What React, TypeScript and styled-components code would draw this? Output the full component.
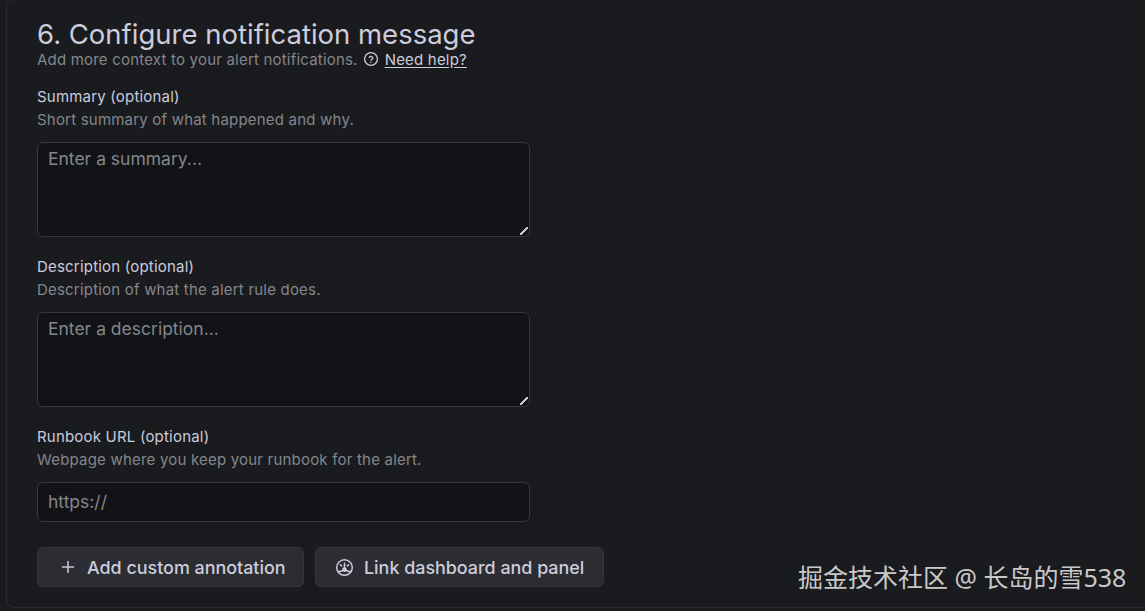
import React from "react";
import styled, { createGlobalStyle } from "styled-components";

const Global = createGlobalStyle`
  html, body { margin: 0; padding: 0; background: #1a1b1f; height: 611px; overflow: hidden; }
  #root { height: 611px; }
  * { box-sizing: border-box; }
`;

const Page = styled.div`
  position: relative;
  width: 1145px;
  height: 611px;
  padding: 0 0 3px 6px;
  overflow: hidden;
  font-family: Inter, "Noto Sans", sans-serif;
  background: #1a1b1f;
`;

const Panel = styled.section`
  height: 609px;
  margin-top: -1px;
  margin-right: -10px;
  padding: 17px 0 0 30px;
  border: 1px solid #2a2c31;
  border-radius: 8px;
  background: #1a1b1f;
`;

const Title = styled.h2`
  margin: 0;
  font-size: 27.5px;
  line-height: 34px;
  font-weight: 400;
  color: #ccccdc;
`;

const Subtitle = styled.div`
  display: flex;
  align-items: center;
  height: 18px;
  margin-top: -1px;
  font-size: 15px;
  color: #84868b;
  letter-spacing: 0.2px;
`;

const HelpLink = styled.a`
  display: inline-flex;
  align-items: center;
  gap: 6px;
  margin-left: 5px;
  color: #ccccdc;
  span { text-decoration: underline; text-underline-offset: 2px; }
  svg { display: block; }
`;

const Field = styled.div<{ $top: number }>`
  margin-top: ${(p) => p.$top}px;
  width: 493px;
`;

const Label = styled.label`
  display: block;
  height: 18px;
  line-height: 18px;
  font-size: 15px;
  font-weight: 400;
  letter-spacing: 0.2px;
  color: #ccccdc;
`;

const Hint = styled.div`
  margin-top: 5px;
  height: 18px;
  line-height: 18px;
  font-size: 15px;
  color: #84868b;
  letter-spacing: 0.2px;
`;

const inputBase = `
  display: block;
  width: 493px;
  margin-top: 13px;
  border: 1px solid #36383d;
  border-radius: 6px;
  background: #121317;
  color: #ccccdc;
  font-family: Inter, "Noto Sans", sans-serif;
  font-size: 17.5px;
  padding: 5px 10px;
  outline: none;
  &::placeholder { color: #84868b; opacity: 1; }
`;

const TextArea = styled.textarea`
  ${inputBase}
  height: 95px;
  line-height: 22px;
  resize: both;
  &::-webkit-resizer {
    background: linear-gradient(135deg, transparent 38%, #c8c8c8 38%, #c8c8c8 62%, transparent 62%) no-repeat right 1px bottom 1px / 8px 8px;
  }
`;

const TextInput = styled.input`
  ${inputBase}
  margin-top: 13px;
  height: 40px;
  padding-bottom: 7px;
`;

const Actions = styled.div`
  display: flex;
  gap: 11px;
  margin-top: 25px;
`;

const Button = styled.button<{ $w: number; $pad: number; $gap: number }>`
  display: flex;
  align-items: center;
  gap: ${(p) => p.$gap}px;
  width: ${(p) => p.$w}px;
  height: 40px;
  padding: 0 0 0 ${(p) => p.$pad}px;
  border: 1px solid #33353a;
  border-radius: 6px;
  background: #2b2d32;
  color: #ccccdc;
  font-family: Inter, "Noto Sans", sans-serif;
  font-size: 17.9px;
  font-weight: 500;
  white-space: nowrap;
  svg { flex: none; display: block; }
`;

const Watermark = styled.div`
  position: absolute;
  left: 798px;
  top: 560px;
  font-family: "Noto Sans", "Noto Sans CJK SC", sans-serif;
  font-size: 25px;
  line-height: 34px;
  color: #c9c9c9;
  white-space: nowrap;
`;

export default function App() {
  return (
    <Page>
      <Global />
      <Panel>
        <Title>6. Configure notification message</Title>
        <Subtitle>
          Add more context to your alert notifications.
          <HelpLink>
            <svg width="16" height="16" viewBox="0 0 16 16" fill="none" stroke="#ccccdc" strokeWidth="1.3" strokeLinecap="round">
              <circle cx="8" cy="8" r="6.4" />
              <path d="M6.2 6.4a1.9 1.9 0 0 1 3.6.5c0 1.2-1.8 1.5-1.8 2.3" />
              <path d="M8 11.2v.1" />
            </svg>
            <span>Need help?</span>
          </HelpLink>
        </Subtitle>
        <Field $top={20}>
          <Label>Summary (optional)</Label>
          <Hint>Short summary of what happened and why.</Hint>
          <TextArea placeholder="Enter a summary..." />
        </Field>
        <Field $top={21}>
          <Label>Description (optional)</Label>
          <Hint>Description of what the alert rule does.</Hint>
          <TextArea placeholder="Enter a description..." />
        </Field>
        <Field $top={21}>
          <Label>Runbook URL (optional)</Label>
          <Hint>Webpage where you keep your runbook for the alert.</Hint>
          <TextInput placeholder="https://" />
        </Field>
        <Actions>
          <Button $w={267} $pad={20} $gap={9}>
            <svg width="20" height="20" viewBox="0 0 20 20" fill="none" stroke="#ccccdc" strokeWidth="1.5" strokeLinecap="round">
              <path d="M10 4.5v11M4.5 10h11" />
            </svg>
            Add custom annotation
          </Button>
          <Button $w={289} $pad={19} $gap={10}>
            <svg width="19" height="19" viewBox="0 0 19 19" fill="none" stroke="#ccccdc" strokeWidth="1.5" strokeLinecap="round" strokeLinejoin="round">
              <circle cx="9.5" cy="9.5" r="7.8" />
              <circle cx="9.5" cy="11.6" r="1.6" fill="#ccccdc" />
              <path d="M9.5 10V5.2M5.4 6.8l1.3 1M13.6 6.8l-1.3 1M2.8 13.4c2 .3 3.8-.1 5.2-1.1M16.2 13.4c-2 .3-3.8-.1-5.2-1.1" />
            </svg>
            Link dashboard and panel
          </Button>
        </Actions>
      </Panel>
      <Watermark>掘金技术社区 @ 长岛的雪538</Watermark>
    </Page>
  );
}
